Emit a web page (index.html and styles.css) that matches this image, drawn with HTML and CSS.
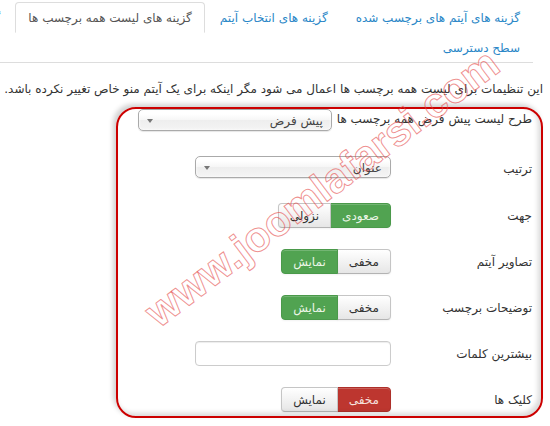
FILE: index.html
```html
<!DOCTYPE html>
<html lang="fa" dir="rtl">
<head>
    <meta charset="UTF-8">
    <title>گزینه های لیست همه برچسب ها</title>
    <link rel="stylesheet" href="styles.css">
</head>
<body>

    <div class="page">
        <!-- Tabs -->
        <ul class="nav-tabs">
            <li><a href="#">گزینه های آیتم های برچسب شده</a></li>
            <li><a href="#">گزینه های انتخاب آیتم</a></li>
            <li class="active"><a href="#">گزینه های لیست همه برچسب ها</a></li>
            <li><a href="#">گزینه های نمایش</a></li>
            <li><a href="#">سطح دسترسی</a></li>
        </ul>

        <p class="intro">این تنظیمات برای لیست همه برچسب ها اعمال می شود مگر اینکه برای یک آیتم منو خاص تغییر نکرده باشد.</p>

        <!-- Options form -->
        <div class="form">
            <div class="control-group select-row first">
                <label class="control-label">طرح لیست پیش فرض همه برچسب ها</label>
                <div class="chzn-single wide-1"><span>پیش فرض</span><b></b></div>
            </div>

            <div class="control-group select-row">
                <label class="control-label">ترتیب</label>
                <div class="chzn-single"><span>عنوان</span><b></b></div>
            </div>

            <div class="control-group">
                <label class="control-label">جهت</label>
                <div class="btn-group">
                    <span class="btn btn-success">صعودی</span>
                    <span class="btn">نزولی</span>
                </div>
            </div>

            <div class="control-group">
                <label class="control-label">تصاویر آیتم</label>
                <div class="btn-group">
                    <span class="btn">مخفی</span>
                    <span class="btn btn-success">نمایش</span>
                </div>
            </div>

            <div class="control-group">
                <label class="control-label">توضیحات برچسب</label>
                <div class="btn-group">
                    <span class="btn">مخفی</span>
                    <span class="btn btn-success">نمایش</span>
                </div>
            </div>

            <div class="control-group">
                <label class="control-label">بیشترین کلمات</label>
                <input type="text" class="text-input">
            </div>

            <div class="control-group">
                <label class="control-label">کلیک ها</label>
                <div class="btn-group">
                    <span class="btn btn-danger">مخفی</span>
                    <span class="btn">نمایش</span>
                </div>
            </div>
        </div>
    </div>

    <!-- Annotation frame and watermark laid over the screenshot -->
    <div class="frame"></div>
    <div class="watermark" dir="ltr">www.joomlafarsi.com</div>

</body>
</html>
```

FILE: styles.css
```css
body {
    margin: 0;
    font-family: Tahoma, "DejaVu Sans", sans-serif;
    font-size: 12px;
    color: #333;
    background-color: #fff;
    overflow: hidden;
    height: 426px;
    position: relative;
}

.page {
    direction: rtl;
    padding-right: 7px;
}

/* Tabs */
.nav-tabs {
    display: flex;
    flex-wrap: wrap;
    list-style: none;
    margin: 2px 10px 0 -200px;
    padding: 0;
    border-bottom: 1px solid #ddd;
}

.nav-tabs li {
    margin: 0 0 -1px 2px;
}

.nav-tabs a {
    display: block;
    padding: 6px 12px 5px;
    line-height: 18px;
    color: #2a87c7;
    text-decoration: none;
    white-space: nowrap;
    border: 1px solid transparent;
    border-radius: 4px 4px 0 0;
}

.nav-tabs .active a {
    color: #555;
    background-color: #fff;
    border-color: #ddd #ddd transparent;
}

.intro {
    margin: 17px 0 0;
    line-height: 18px;
    white-space: nowrap;
}

/* Form rows */
.form {
    padding-right: 11px;
    margin-top: 11px;
}

.control-group {
    display: flex;
    align-items: flex-start;
    margin-bottom: 21px;
}

.control-group.select-row {
    margin-bottom: 25px;
}

.control-label {
    box-sizing: border-box;
    min-width: 141px;
    padding: 4px 0 0 5px;
    line-height: 18px;
    white-space: nowrap;
}

.control-group.first .control-label {
    padding-top: 1px;
}

.chzn-single {
    box-sizing: border-box;
    width: 196px;
    height: 22px;
    display: flex;
    align-items: center;
    justify-content: space-between;
    padding: 2px 8px 0 8px;
    border: 1px solid #aaa;
    border-radius: 5px;
    background: linear-gradient(#fff 20%, #f6f6f6 50%, #eee 52%, #f4f4f4);
    box-shadow: 0 0 3px #fff inset, 0 1px 1px rgba(0, 0, 0, 0.1);
    color: #444;
}

.chzn-single.wide-1 {
    width: 194px;
}

.chzn-single b {
    width: 0;
    height: 0;
    border-left: 3px solid transparent;
    border-right: 3px solid transparent;
    border-top: 4px solid #777;
}

.btn-group {
    display: flex;
}

.btn {
    padding: 0 11px;
    height: 25px;
    line-height: 24px;
    box-sizing: border-box;
    color: #333;
    background: linear-gradient(#fff, #e6e6e6);
    border: 1px solid #c5c5c5;
    border-bottom-color: #b3b3b3;
    box-shadow: inset 0 1px 0 rgba(255, 255, 255, 0.2), 0 1px 2px rgba(0, 0, 0, 0.05);
}

.btn:first-child {
    border-radius: 0 4px 4px 0;
}

.btn:last-child {
    border-radius: 4px 0 0 4px;
    margin-right: -1px;
}

.btn-success {
    color: #eaf5e6;
    background: #51a351;
    border-color: #4a994a;
}

.btn-danger {
    color: #f6e0de;
    background: #bd362f;
    border-color: #ad302a;
}

.text-input {
    box-sizing: border-box;
    width: 196px;
    height: 25px;
    margin: 0;
    border: 1px solid #ccc;
    border-radius: 4px;
    box-shadow: inset 0 1px 1px rgba(0, 0, 0, 0.075);
}

/* Red annotation frame */
.frame {
    position: absolute;
    left: 116px;
    top: 107px;
    width: 423px;
    height: 307px;
    border: 2px solid #cc0000;
    border-radius: 20px;
    box-shadow: -3px -3px 5px rgba(0, 0, 0, 0.18), inset -3px -3px 5px rgba(0, 0, 0, 0.15);
    pointer-events: none;
}

/* Site watermark */
.watermark {
    position: absolute;
    left: 322px;
    top: 188px;
    transform: translate(-50%, -50%) rotate(-37deg);
    font-family: "Liberation Sans", Arial, sans-serif;
    font-size: 42px;
    font-weight: bold;
    color: transparent;
    -webkit-text-stroke: 1px rgba(228, 70, 70, 0.6);
    white-space: nowrap;
    pointer-events: none;
}
```
